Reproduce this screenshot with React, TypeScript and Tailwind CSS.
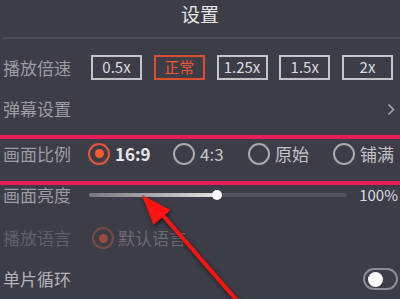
import React from "react";

const speeds = ["0.5x", "正常", "1.25x", "1.5x", "2x"];

const ratios = [
  { label: "16:9", w: "w-[85px]", active: true },
  { label: "4:3", w: "w-[75px]", active: false },
  { label: "原始", w: "w-[85px]", active: false },
  { label: "铺满", w: "w-[65px]", active: false },
];

const Radio = ({ active }: { active: boolean }) => (
  <span
    className={
      active
        ? "flex h-[22px] w-[22px] items-center justify-center rounded-full border-2 border-[#e0593a]"
        : "flex h-[22px] w-[22px] items-center justify-center rounded-full border-2 border-[#a9a9ae]"
    }
  >
    {active && <span className="h-[9px] w-[9px] rounded-full bg-[#ff5a2e]" />}
  </span>
);

const App = () => {
  return (
    <div className="relative h-[299px] w-[400px] overflow-hidden bg-[#3d3d47] font-['Noto_Sans_CJK_SC','Noto_Sans',sans-serif] text-[17px]">
      {/* titre */}
      <div className="flex h-[37px] justify-center text-[19px] leading-[28px] text-[#e8e8ea]">
        <span>设置</span>
      </div>
      <div className="ml-[3px] h-[2px] bg-[#4c4d57]" />

      {/* vitesse */}
      <div className="flex h-[57px] items-center pl-[3px]">
        <span className="w-[88px] text-[#9c9ca4]">播放倍速</span>
        <div className="flex w-[302px] justify-between">
          {speeds.map((s) => (
            <span
              key={s}
              className={
                s === "正常"
                  ? "flex h-[25px] w-[51px] items-center justify-center border-2 border-[#d9502f] text-[15px] text-[#f0562f]"
                  : "flex h-[25px] w-[51px] items-center justify-center border-2 border-[#c4c4c8] text-[15px] text-[#dcdce0]"
              }
            >
              {s}
            </span>
          ))}
        </div>
      </div>

      {/* danmaku */}
      <div className="flex h-[26px] items-center justify-between pl-[3px] pr-[5px]">
        <span className="text-[#9c9ca4]">弹幕设置</span>
        <svg width="8" height="13" viewBox="0 0 8 13">
          <path d="M1.5 1.5 L6.5 6.5 L1.5 11.5" stroke="#a4a4aa" strokeWidth="1.6" fill="none" />
        </svg>
      </div>

      <div className="mt-[13px] h-[4px] bg-[#e91c5b]" />

      {/* ratio */}
      <div className="flex h-[29px] items-center pl-[3px]">
        <span className="w-[85px] text-[#9c9ca4]">画面比例</span>
        {ratios.map((r) => (
          <div key={r.label} className={`flex items-center gap-[5px] ${r.w}`}>
            <Radio active={r.active} />
            <span
              className={
                r.active
                  ? "text-[17px] font-semibold text-[#e6e6ea]"
                  : "text-[17px] text-[#c4c4c8]"
              }
            >
              {r.label}
            </span>
          </div>
        ))}
      </div>

      <div className="mt-[13px] h-[4px] bg-[#e91c5b]" />

      {/* luminosite */}
      <div className="flex h-[20px] items-center pl-[3px] pr-[2px]">
        <span className="w-[86px] leading-[16px] text-[#9c9ca4]">画面亮度</span>
        <div className="relative h-[4px] w-[258px] rounded-full bg-[#52535c]">
          <div className="h-[4px] w-[128px] rounded-full bg-gradient-to-r from-[#77777d] to-[#e2e2e4]" />
          <div className="absolute left-[123px] top-[-3px] h-[10px] w-[10px] rounded-full bg-white" />
        </div>
        <span className="ml-auto text-[15px] text-[#dcdce0]">100%</span>
      </div>

      {/* langue */}
      <div className="mt-[21px] flex h-[24px] items-center pl-[3px]">
        <span className="w-[89px] text-[#5f606a]">播放语言</span>
        <span className="flex h-[22px] w-[22px] items-center justify-center rounded-full border-2 border-[#7a4a42]">
          <span className="h-[9px] w-[9px] rounded-full bg-[#9a4a3a]" />
        </span>
        <span className="ml-[4px] text-[#6a6b74]">默认语言</span>
      </div>

      {/* boucle */}
      <div className="mt-[18px] flex h-[22px] items-center justify-between pl-[3px] pr-[2px]">
        <span className="text-[#b4b4ba]">单片循环</span>
        <span className="flex h-[22px] w-[35px] items-center rounded-full border-2 border-[#8c8c92] pl-[3px]">
          <span className="h-[15px] w-[15px] rounded-full bg-white" />
        </span>
      </div>

      {/* fleche */}
      <svg
        className="pointer-events-none absolute left-0 top-0"
        width="400"
        height="299"
        viewBox="0 0 400 299"
        style={{ filter: "drop-shadow(1px 2px 2px rgba(0,0,0,0.6))" }}
      >
        <line x1="160" y1="212" x2="240" y2="304" stroke="#ff1212" strokeWidth="4" />
        <polygon points="142,195 153.5,225 170.5,210" fill="#ff1212" />
      </svg>
    </div>
  );
};

export default App;
